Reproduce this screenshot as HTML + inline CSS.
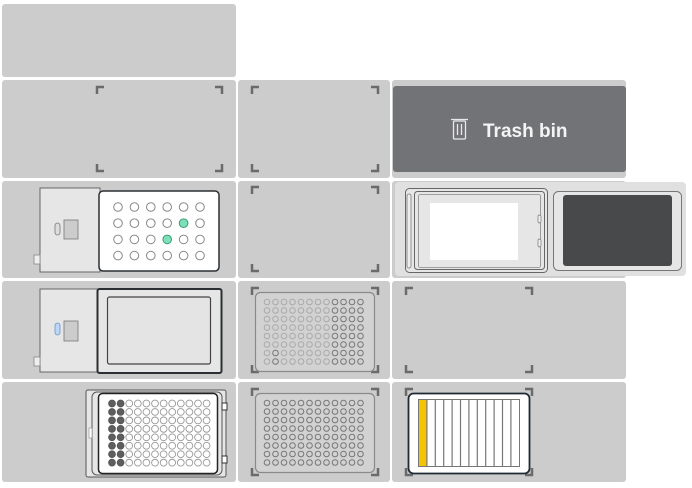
<!DOCTYPE html>
<html><head><meta charset="utf-8"><style>
html,body{margin:0;padding:0;background:#fff;width:692px;height:488px;overflow:hidden}
svg{display:block}
text{font-family:"Liberation Sans",sans-serif}
</style></head><body>
<svg id="s" width="692" height="488" viewBox="0 0 692 488" xmlns="http://www.w3.org/2000/svg">
<g fill="#cbcccb">
<rect x="2" y="4" width="234" height="73" rx="3"/>
<rect x="2" y="80" width="234" height="98" rx="3"/>
<rect x="238" y="80" width="152" height="98" rx="3"/>
<rect x="392" y="80" width="234" height="98" rx="3"/>
<rect x="2" y="181" width="234" height="97" rx="3"/>
<rect x="238" y="181" width="152" height="97" rx="3"/>
<rect x="392" y="181" width="234" height="97" rx="3"/>
<rect x="2" y="281" width="234" height="98" rx="3"/>
<rect x="238" y="281" width="152" height="98" rx="3"/>
<rect x="392" y="281" width="234" height="98" rx="3"/>
<rect x="2" y="382" width="234" height="100" rx="3"/>
<rect x="238" y="382" width="152" height="100" rx="3"/>
<rect x="392" y="382" width="234" height="100" rx="3"/>
</g>
<!-- trash -->
<rect x="393" y="86" width="233" height="86" rx="3" fill="#727376"/>
<g stroke="#e8e8e8" stroke-width="1.3" fill="none">
<rect x="453.5" y="121" width="12" height="18" rx="1"/>
<line x1="451" y1="119.5" x2="468" y2="119.5"/>
<line x1="457.5" y1="124" x2="457.5" y2="135"/>
<line x1="461.5" y1="124" x2="461.5" y2="135"/>
</g>
<text x="483" y="137" font-size="19" font-weight="bold" fill="#f4f4f4">Trash bin</text>
<g id="br" stroke="#6b6b6b" stroke-width="2.5" fill="none"></g>
<!-- row2 col1 module -->
<rect x="40" y="188" width="60" height="84" fill="#e6e6e6" stroke="#666" stroke-width="1"/>
<rect x="34" y="255" width="6" height="9" fill="#eee" stroke="#888" stroke-width="0.8"/>
<rect x="55" y="223" width="5" height="12" rx="2.5" fill="#ddd" stroke="#777" stroke-width="0.8"/>
<rect x="64" y="220" width="14" height="19" fill="#ccc" stroke="#777" stroke-width="0.8"/>
<rect x="99" y="191" width="120" height="80" rx="4" fill="#fff" stroke="#2b2f33" stroke-width="1.5"/>
<g id="w24"></g>
<!-- row3 col1 module -->
<rect x="40" y="289" width="60" height="83" fill="#e6e6e6" stroke="#666" stroke-width="1"/>
<rect x="34" y="357" width="6" height="9" fill="#eee" stroke="#888" stroke-width="0.8"/>
<rect x="55" y="323" width="5" height="12" rx="2.5" fill="#bcd6f5" stroke="#6b93c8" stroke-width="0.8"/>
<rect x="64" y="321" width="14" height="20" fill="#ccc" stroke="#777" stroke-width="0.8"/>
<rect x="97.5" y="289" width="124" height="84" rx="2" fill="#e6e6e6" stroke="#2b2f33" stroke-width="2"/>
<rect x="107.5" y="297" width="103" height="67" rx="2" fill="#e4e4e4" stroke="#444" stroke-width="1.2"/>
<!-- row4 col1 plate -->
<rect x="86" y="390" width="140" height="87" rx="2" fill="#e6e6e6" stroke="#555" stroke-width="1"/>
<rect x="92" y="392" width="130" height="83" rx="5" fill="#e6e6e6" stroke="#555" stroke-width="1"/>
<rect x="89" y="428" width="3" height="10" fill="#fff" stroke="#888" stroke-width="0.6"/>
<rect x="222" y="403" width="5" height="7" fill="#fff" stroke="#333" stroke-width="1"/>
<rect x="222" y="456" width="5" height="7" fill="#fff" stroke="#333" stroke-width="1"/>
<rect x="98.5" y="393.5" width="119" height="80" rx="4" fill="#fff" stroke="#222" stroke-width="1.5"/>
<g id="w96a"></g>
<!-- col2 row3 / row4 plates -->
<rect x="255.5" y="292.5" width="119" height="79" rx="5" fill="#d2d2d2" stroke="#8a8a8a" stroke-width="1.2"/>
<rect x="255.5" y="393.5" width="119" height="79" rx="5" fill="#d2d2d2" stroke="#8a8a8a" stroke-width="1.2"/>
<g id="w96b"></g>
<!-- col3 row2 -->
<rect x="395" y="182" width="291" height="94" rx="4" fill="#e0e0e0"/>
<rect x="405.5" y="188.5" width="142" height="84" rx="4" fill="#e6e6e6" stroke="#666" stroke-width="1"/>
<rect x="407" y="194" width="4" height="74" rx="2" fill="#eee" stroke="#777" stroke-width="0.8"/>
<rect x="414.5" y="191.5" width="130" height="78" rx="3" fill="#e6e6e6" stroke="#666" stroke-width="1"/>
<rect x="418.5" y="194.5" width="122" height="73" rx="2" fill="#e6e6e6" stroke="#888" stroke-width="0.8"/>
<rect x="430" y="203" width="88" height="57" rx="1" fill="#fff"/>
<rect x="538" y="215" width="3" height="8" rx="1.5" fill="#eee" stroke="#777" stroke-width="0.7"/>
<rect x="538" y="239" width="3" height="8" rx="1.5" fill="#eee" stroke="#777" stroke-width="0.7"/>
<rect x="553.5" y="191.5" width="128" height="79" rx="5" fill="#e6e6e6" stroke="#777" stroke-width="1"/>
<rect x="563" y="195" width="109" height="71" rx="3" fill="#48494b"/>
<!-- col3 row4 tube rack -->
<rect x="408.5" y="393.5" width="121" height="80" rx="5" fill="#fff" stroke="#1f2a33" stroke-width="1.8"/>
<rect x="418.5" y="399.5" width="101" height="67" fill="#fff" stroke="#777" stroke-width="1"/>
<rect x="419" y="400" width="7.5" height="66" fill="#f5c400"/>
<g id="tr" stroke="#777" stroke-width="1.2"></g>
</svg>
<script>
var NS="http://www.w3.org/2000/svg";
function el(p,t,a){var e=document.createElementNS(NS,t);for(var k in a)e.setAttribute(k,a[k]);p.appendChild(e);return e;}
var br=document.getElementById('br');
function brackets(x1,y1,x2,y2){var L=7;
[[x1,y1,1,1],[x2,y1,-1,1],[x1,y2,1,-1],[x2,y2,-1,-1]].forEach(function(c){
el(br,'path',{d:'M'+(c[0]+c[2]*L)+' '+c[1]+'H'+c[0]+'V'+(c[1]+c[3]*L)});});}
brackets(97,87,222,171);brackets(252,87,378,171);brackets(252,187,378,271);
brackets(406,288,532,372);brackets(252,288,378,372);brackets(252,389,378,475);brackets(406,389,532,475);
var w=document.getElementById('w24');
for(var r=0;r<4;r++)for(var c=0;c<6;c++){var g=(r==1&&c==4)||(r==2&&c==3);
el(w,'circle',{cx:118+c*16.4,cy:207+r*16.2,r:4.3,fill:g?'#7ee0b8':'#fff',stroke:g?'#3b9a78':'#888','stroke-width':1});}
var a=document.getElementById('w96a');
for(var r=0;r<8;r++)for(var c=0;c<12;c++){var d=c<2;
el(a,'circle',{cx:112+c*8.6,cy:403.5+r*8.45,r:3.4,fill:d?'#5e5e60':'#fff',stroke:d?'#555':'#999','stroke-width':0.9});}
var b=document.getElementById('w96b');
[292,393].forEach(function(y0,i){for(var r=0;r<8;r++)for(var c=0;c<12;c++){
var dk=(i==1)||c>=8||(c==1&&r>=6);
el(b,'circle',{cx:267+c*8.5,cy:y0+10+r*8.5,r:2.8,fill:'none',stroke:dk?'#777':'#aaa','stroke-width':1});}});
var t=document.getElementById('tr');
for(var i=1;i<12;i++){var x=418.5+i*8.4;el(t,'line',{x1:x,y1:400,x2:x,y2:466});}
</script>
</body></html>
